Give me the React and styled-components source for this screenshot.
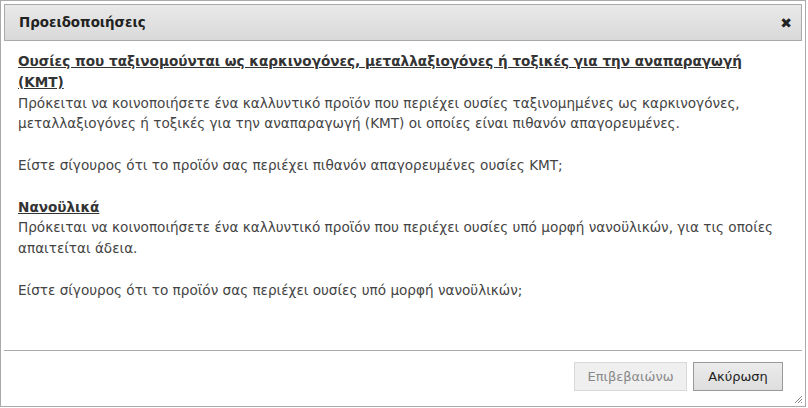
import React from "react";
import styled, { createGlobalStyle } from "styled-components";

const Global = createGlobalStyle`
  html, body { margin: 0; padding: 0; background: #fff; }
  body { font-family: "DejaVu Sans", Verdana, sans-serif; }
`;

const Dialog = styled.div`
  box-sizing: border-box;
  width: 806px;
  height: 407px;
  border: 1px solid #aaa;
  padding: 3px;
  display: flex;
  flex-direction: column;
  background: #fff;
  position: relative;
`;

const TitleBar = styled.div`
  box-sizing: border-box;
  height: 37px;
  border: 1px solid #aaa;
  background: linear-gradient(#e9e9e9, #d9d9d9);
  display: flex;
  align-items: center;
  justify-content: space-between;
  padding: 0 9px 0 14px;
`;

const Title = styled.span`
  font-weight: bold;
  font-size: 13.4px;
  color: #222;
`;

const Close = styled.span`
  font-size: 14px;
  color: #222;
  line-height: 1;
`;

const Content = styled.div`
  flex: 1;
  padding: 10px 13px 0 14px;
  font-size: 13.6px;
  line-height: 20.8px;
  color: #444;
`;

const Heading = styled.div`
  font-weight: bold;
  text-decoration: underline;
  color: #333;
`;

const Para = styled.p`
  margin: 0 0 20.8px 0;
`;

const ButtonPane = styled.div`
  border-top: 1px solid #aaa;
  display: flex;
  justify-content: flex-end;
  gap: 6px;
  padding: 11px 19px 12px 0;
`;

const Button = styled.button`
  font-family: "DejaVu Sans", Verdana, sans-serif;
  font-size: 13px;
  height: 29px;
  padding: 0 10px;
  border: 1px solid ${(p) => (p.disabled ? "#d8d8d8" : "#999")};
  background: ${(p) => (p.disabled ? "#efefef" : "linear-gradient(#ebebeb, #dedede)")};
  color: ${(p) => (p.disabled ? "#888" : "#222")};
  border-radius: 0;
  cursor: default;
  width: ${(p) => p.w}px;
`;

const Grip = styled.svg`
  position: absolute;
  right: 2px;
  bottom: 2px;
`;

export default function App() {
  return (
    <>
      <Global />
      <Dialog>
        <TitleBar>
          <Title>Προειδοποιήσεις</Title>
          <Close>✖</Close>
        </TitleBar>
        <Content>
          <Heading>
            Ουσίες που ταξινομούνται ως καρκινογόνες, μεταλλαξιογόνες ή τοξικές για την αναπαραγωγή (ΚΜΤ)
          </Heading>
          <Para>
            Πρόκειται να κοινοποιήσετε ένα καλλυντικό προϊόν που περιέχει ουσίες ταξινομημένες ως καρκινογόνες,
            μεταλλαξιογόνες ή τοξικές για την αναπαραγωγή (ΚΜΤ) οι οποίες είναι πιθανόν απαγορευμένες.
          </Para>
          <Para>Είστε σίγουρος ότι το προϊόν σας περιέχει πιθανόν απαγορευμένες ουσίες ΚΜΤ;</Para>
          <Heading>Νανοϋλικά</Heading>
          <Para>
            Πρόκειται να κοινοποιήσετε ένα καλλυντικό προϊόν που περιέχει ουσίες υπό μορφή νανοϋλικών, για τις οποίες
            απαιτείται άδεια.
          </Para>
          <Para>Είστε σίγουρος ότι το προϊόν σας περιέχει ουσίες υπό μορφή νανοϋλικών;</Para>
        </Content>
        <ButtonPane>
          <Button disabled w={113}>Επιβεβαιώνω</Button>
          <Button w={90}>Ακύρωση</Button>
        </ButtonPane>
        <Grip width="10" height="10" viewBox="0 0 10 10">
          <path d="M9 2 L2 9 M9 5 L5 9 M9 8 L8 9" stroke="#888" strokeWidth="1" />
        </Grip>
      </Dialog>
    </>
  );
}
